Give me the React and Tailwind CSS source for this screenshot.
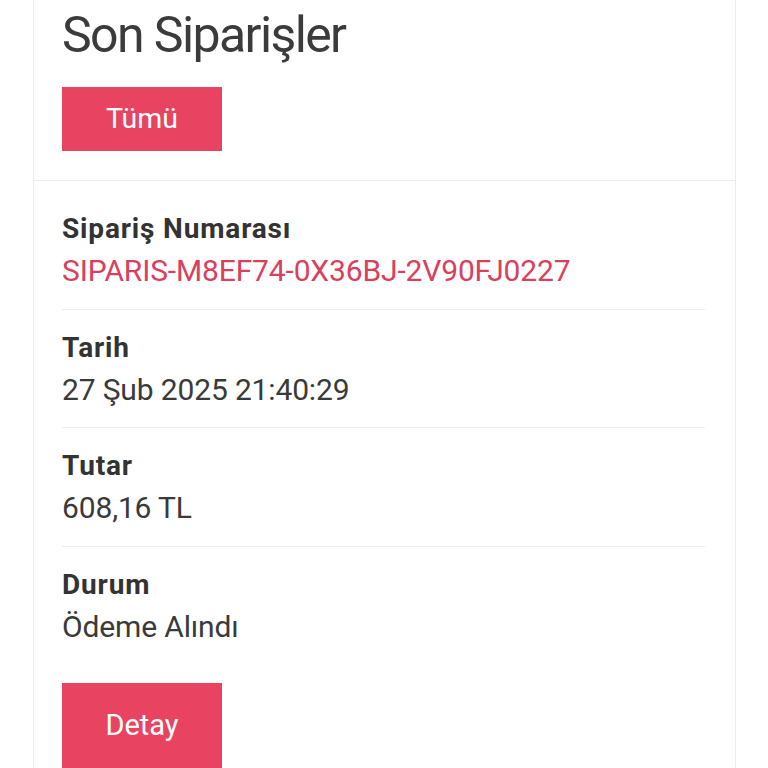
export default function App() {
  const rows = [
    { label: "Sipariş Numarası", value: "SIPARIS-M8EF74-0X36BJ-2V90FJ0227", red: true },
    { label: "Tarih", value: "27 Şub 2025 21:40:29" },
    { label: "Tutar", value: "608,16 TL" },
    { label: "Durum", value: "Ödeme Alındı" },
  ];

  return (
    <div className="min-h-screen bg-white overflow-hidden" style={{ height: 768 }}>
      <div className="ml-[33px] mr-[32px] border-x border-[#ececec] h-full font-['Roboto',sans-serif]">
        {/* HEADER */}
        <div className="pl-[28px] pr-[30px] pt-[5px] pb-[29px] border-b border-[#eeeeee]">
          <h1 className="text-[50px] leading-[60px] tracking-[-0.032em] text-[#3b3b3b] font-normal">
            Son Siparişler
          </h1>
          <button className="mt-[22px] w-[160px] h-[64px] bg-[#e84462] text-white text-[28.5px] flex items-center justify-center">
            Tümü
          </button>
        </div>

        {/* BODY */}
        <div className="pl-[28px] pr-[30px] pt-[10px]">
          {rows.map((r, i) => (
            <div
              key={r.label}
              className={`pt-[18px] pb-[16.5px] ${i < rows.length - 1 ? "border-b border-[#eeeeee]" : ""}`}
            >
              <div className="text-[28px] leading-[40px] tracking-[0.03em] font-bold text-[#333333]">
                {r.label}
              </div>
              <div
                className={`text-[30px] leading-[43px] tracking-[-0.005em] ${r.red ? "text-[#db3f5e]" : "text-[#3a3a3a]"}`}
              >
                {r.value}
              </div>
            </div>
          ))}
          <button className="mt-[19px] w-[160px] h-[86px] bg-[#e84462] text-white text-[29px] flex items-center justify-center">
            Detay
          </button>
        </div>
      </div>
    </div>
  );
}
